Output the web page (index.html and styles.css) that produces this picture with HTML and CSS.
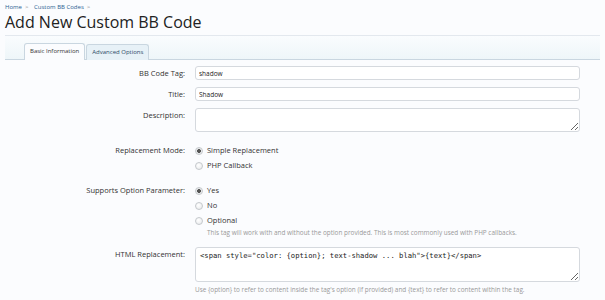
FILE: index.html
```html
<!DOCTYPE html>
<html lang="en">

<head>
    <meta charset="UTF-8">
    <title>Add New Custom BB Code</title>
    <link rel="stylesheet" href="styles.css">
</head>

<body>
    <div class="breadcrumb">
        <a href="#">Home</a><span class="sep">&gt;</span>
        <a href="#">Custom BB Codes</a><span class="sep">&gt;</span>
    </div>
    <h1 class="title">Add New Custom BB Code</h1>

    <div class="tab-bar">
        <span class="tab active">Basic Information</span>
        <span class="tab">Advanced Options</span>
    </div>

    <form class="form">
        <div class="row">
            <label class="label">BB Code Tag:</label>
            <div class="field"><input class="text" type="text" value="shadow"></div>
        </div>
        <div class="row">
            <label class="label">Title:</label>
            <div class="field"><input class="text" type="text" value="Shadow"></div>
        </div>
        <div class="row">
            <label class="label">Description:</label>
            <div class="field"><textarea class="text area-small"></textarea></div>
        </div>

        <div class="row spaced">
            <label class="label">Replacement Mode:</label>
            <div class="field">
                <label class="choice"><input type="radio" name="mode" checked> Simple Replacement</label>
                <label class="choice"><input type="radio" name="mode"> PHP Callback</label>
            </div>
        </div>

        <div class="row spaced">
            <label class="label">Supports Option Parameter:</label>
            <div class="field">
                <label class="choice"><input type="radio" name="opt" checked> Yes</label>
                <label class="choice"><input type="radio" name="opt"> No</label>
                <label class="choice"><input type="radio" name="opt"> Optional</label>
                <p class="hint indent">This tag will work with and without the option provided. This is most commonly used with PHP callbacks.</p>
            </div>
        </div>

        <div class="row spaced">
            <label class="label">HTML Replacement:</label>
            <div class="field">
                <textarea class="text area-code">&lt;span style="color: {option}; text-shadow ... blah"&gt;{text}&lt;/span&gt;</textarea>
                <p class="hint">Use {option} to refer to content inside the tag's option (if provided) and {text} to refer to content within the tag.</p>
            </div>
        </div>
    </form>
</body>

</html>
```

FILE: styles.css
```css
body {
    font-family: "Open Sans", "Noto Sans", sans-serif;
    margin: 0;
    padding: 0 5px;
    background-color: #fbfcfe;
    color: #333;
    font-size: 7.5px;
}

.breadcrumb {
    padding-top: 2px;
    font-size: 6px;
    line-height: 10px;
    height: 10px;
}

.breadcrumb a {
    color: #2b5f93;
    text-decoration: none;
}

.breadcrumb .sep {
    color: #888;
    margin: 0 4px 0 3px;
}

.title {
    margin: 0;
    font-size: 16px;
    font-weight: normal;
    color: #222;
    line-height: 21px;
    padding-bottom: 2px;
    border-bottom: 1px solid #e3e8ee;
}

.tab-bar {
    display: flex;
    align-items: flex-end;
    height: 23px;
    padding-left: 19px;
    background: linear-gradient(to bottom, #fafcfe, #eef6f9);
    border-bottom: 1px solid #c9d6e0;
}

.tab {
    font-size: 6px;
    line-height: 15px;
    padding: 0 5px;
    margin-right: 1px;
    margin-bottom: -1px;
    border: 1px solid #c9d6e0;
    border-bottom: none;
    border-radius: 3px 3px 0 0;
    background: #e7f1f7;
    color: #2b4a66;
}

.tab.active {
    background: #fbfcfe;
    color: #333;
    padding-bottom: 1px;
}

.form {
    padding-top: 6px;
}

.row {
    display: grid;
    grid-template-columns: 180px 385px;
    column-gap: 10px;
    margin-bottom: 7px;
}

.row.spaced {
    margin-top: 11px;
}

.row.spaced + .row.spaced {
    margin-top: 10px;
}

.label {
    text-align: right;
    line-height: 14px;
    color: #333;
}

.field {
    display: flex;
    flex-direction: column;
}

.text {
    box-sizing: border-box;
    width: 100%;
    height: 14px;
    font-family: inherit;
    font-size: 6.5px;
    padding: 0 3px;
    border: 1px solid #d5d9de;
    border-radius: 3px;
    background: #fff;
    color: #222;
}

.area-small {
    height: 24px;
}

.area-code {
    height: 35px;
    font-family: "DejaVu Sans Mono", monospace;
    font-size: 7.2px;
    padding: 3px 4px;
    line-height: 10px;
}

.choice {
    display: flex;
    align-items: center;
    gap: 4px;
    height: 15px;
    line-height: 15px;
}

.choice input {
    appearance: none;
    margin: 0;
    width: 8px;
    height: 8px;
    border: 1px solid #c4c8cc;
    border-radius: 50%;
    background: radial-gradient(circle at 40% 35%, #fff, #e6e8ea);
}

.choice input:checked {
    background: radial-gradient(circle, #555 0, #555 1.6px, #e9eaeb 2.2px, #f4f5f6 100%);
}

.hint {
    margin: 3px 0 0;
    font-size: 6.4px;
    line-height: 9px;
    color: #999;
}

.hint.indent {
    margin-top: 0;
    padding-left: 12px;
}
```
